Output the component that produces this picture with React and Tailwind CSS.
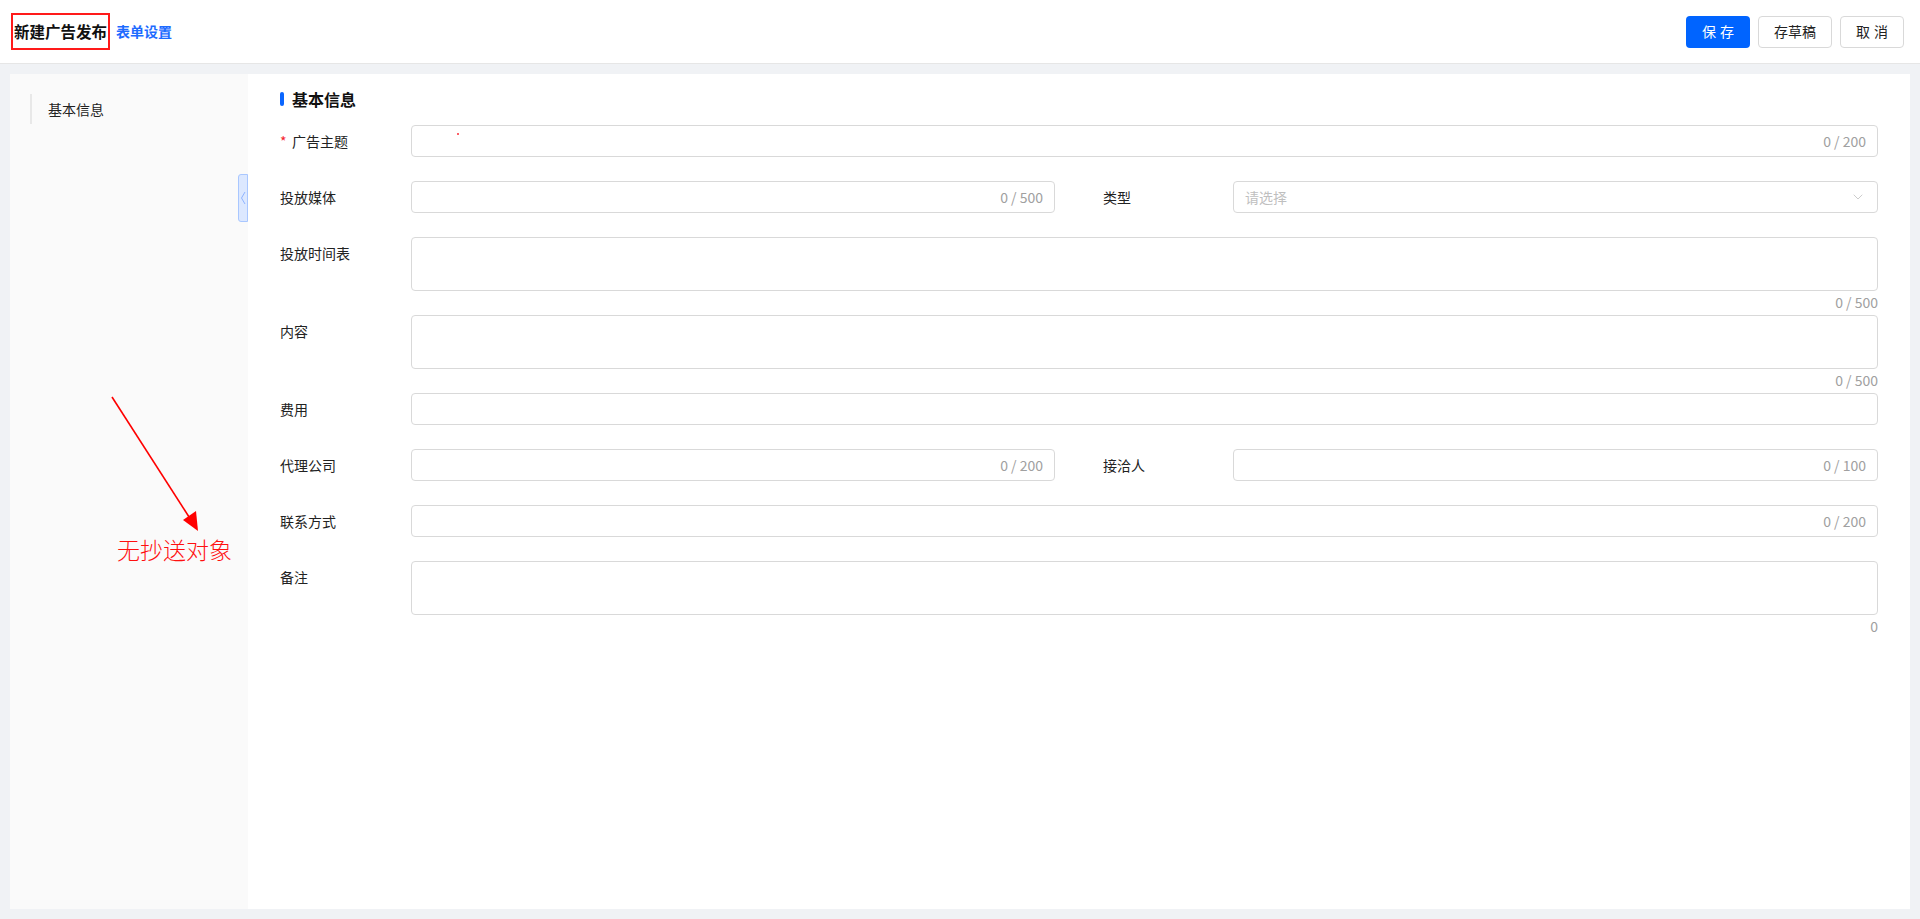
import { ChevronDown } from 'lucide-react'

const font = { fontFamily: '"Microsoft YaHei", "Noto Sans CJK SC", sans-serif' }

function Label({ text, required }) {
  return (
    <div className="w-[131px] shrink-0 h-8 flex items-center text-[14px] text-[#222]">
      {required && <span className="text-[#f5222d] mr-[5px] w-[7px]">*</span>}
      {text}
    </div>
  )
}

function Input({ count, dot }) {
  return (
    <div className="relative flex-1 h-8 border border-[#d9d9d9] rounded-[4px] bg-white flex items-center justify-end px-[11px]">
      {dot && <span className="absolute left-[45px] top-[7px] w-[2px] h-[2px] bg-red-500 rounded-full" />}
      {count && <span className="text-[14px] text-[#a0a0a0]">{count}</span>}
    </div>
  )
}

function Row({ children }) {
  return <div className="flex mb-6">{children}</div>
}

function Field({ label, count, required, dot }) {
  return (
    <div className="flex flex-1">
      <Label text={label} required={required} />
      <Input count={count} dot={dot} />
    </div>
  )
}

function AreaField({ label, count }) {
  return (
    <div className="flex">
      <Label text={label} />
      <div className="flex-1">
        <div className="h-[54px] border border-[#d9d9d9] rounded-[4px] bg-white" />
        <div className="h-6 text-right text-[14px] leading-[22px] text-[#a0a0a0]">{count}</div>
      </div>
    </div>
  )
}

export default function App() {
  return (
    <div className="w-[1920px] h-[919px] flex flex-col bg-[#f0f2f5]" style={font}>
      {/* header */}
      <div className="h-16 shrink-0 bg-white border-b border-[#e6e6e6] flex items-center pl-[11px] pr-4">
        <div className="h-[37px] border-2 border-[#ff1a1a] flex items-center px-[1px]">
          <span className="text-[15.5px] font-bold text-[#111]">新建广告发布</span>
        </div>
        <span className="ml-[6px] text-[14px] font-semibold text-[#1d6bff]">表单设置</span>
        <div className="ml-auto flex gap-2">
          <button className="w-16 h-8 rounded-[4px] bg-[#0064ff] text-white text-[14px] tracking-[4px] pl-1">保存</button>
          <button className="w-[74px] h-8 rounded-[4px] border border-[#d9d9d9] bg-white text-[14px] text-[#222]">存草稿</button>
          <button className="w-16 h-8 rounded-[4px] border border-[#d9d9d9] bg-white text-[14px] text-[#222] tracking-[4px] pl-1">取消</button>
        </div>
      </div>

      {/* body */}
      <div className="flex-1 p-[10px] flex min-h-0">
        <div className="flex flex-1">
          {/* sidebar */}
          <div className="relative w-[238px] shrink-0 bg-[#fafafa] pl-5 pt-5">
            <div className="h-[30px] border-l-2 border-[#e8e8e8] pl-4 flex items-center text-[14px] text-[#222]">基本信息</div>
            <div className="absolute right-0 top-[100px] w-[10px] h-12 bg-[#dce8ff] border border-[#a9c7ff] rounded-l-[3px] flex items-center justify-center">
              <svg width="6" height="14" viewBox="0 0 6 14" fill="none" stroke="#8fb4ff" strokeWidth="1">
                <path d="M5 1L1.5 7L5 13" />
              </svg>
            </div>
            {/* annotation */}
            <svg className="absolute left-0 top-0" width="238" height="480" viewBox="0 0 238 480">
              <line x1="102" y1="323" x2="181" y2="446" stroke="#ff0000" strokeWidth="1.6" />
              <polygon points="188,457 173,446 186,437" fill="#ff0000" />
            </svg>
            <div
              className="absolute left-[107px] top-[463px] text-[23px] leading-[30px] text-[#ff1010]"
              style={{ fontFamily: '"Liberation Serif", "Noto Sans CJK SC", serif', fontWeight: 300 }}
            >
              无抄送对象
            </div>
          </div>

          {/* main */}
          <div className="flex-1 bg-white pl-8 pr-8">
            <div className="mt-[13px] mb-[14px] h-6 flex items-center">
              <span className="w-1 h-[14px] bg-[#0a66ff] rounded-full mr-2" />
              <span className="text-[16px] font-bold text-[#111]">基本信息</span>
            </div>
            <Row>
              <Field label="广告主题" count="0 / 200" required dot />
            </Row>
            <Row>
              <div className="flex flex-1 gap-12">
                <Field label="投放媒体" count="0 / 500" />
                <div className="flex flex-1">
                  <div className="w-[130px] shrink-0 h-8 flex items-center text-[14px] text-[#222]">类型</div>
                  <div className="flex-1 h-8 border border-[#d9d9d9] rounded-[4px] flex items-center justify-between px-[11px]">
                    <span className="text-[14px] text-[#bfbfbf]">请选择</span>
                    <ChevronDown size={16} strokeWidth={1.2} className="text-[#bfbfbf]" />
                  </div>
                </div>
              </div>
            </Row>
            <AreaField label="投放时间表" count="0 / 500" />
            <AreaField label="内容" count="0 / 500" />
            <Row>
              <Field label="费用" />
            </Row>
            <Row>
              <div className="flex flex-1 gap-12">
                <Field label="代理公司" count="0 / 200" />
                <div className="flex flex-1">
                  <div className="w-[130px] shrink-0 h-8 flex items-center text-[14px] text-[#222]">接洽人</div>
                  <Input count="0 / 100" />
                </div>
              </div>
            </Row>
            <Row>
              <Field label="联系方式" count="0 / 200" />
            </Row>
            <AreaField label="备注" count="0" />
          </div>
        </div>
      </div>
    </div>
  )
}
